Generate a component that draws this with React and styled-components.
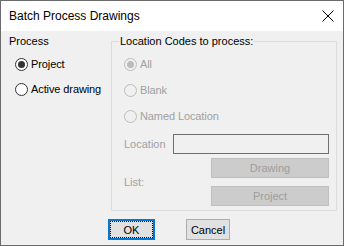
import styled, { createGlobalStyle } from "styled-components";

const GlobalStyle = createGlobalStyle`
  html, body {
    margin: 0;
    padding: 0;
    background: #f0f0f0;
  }
  body {
    font-family: "Liberation Sans", Arial, sans-serif;
    font-size: 11px;
    color: #000;
  }
`;

const Window = styled.div`
  width: 344px;
  height: 246px;
  box-sizing: border-box;
  border: 1px solid #6b6b6b;
  background: #f0f0f0;
  display: flex;
  flex-direction: column;
`;

const TitleBar = styled.div`
  height: 30px;
  flex: none;
  background: #fff;
  display: flex;
  align-items: center;
  justify-content: space-between;
  padding: 0 8px 0 8px;
  font-family: "Liberation Sans", Arial, sans-serif;
  font-size: 12px;
`;

const CloseIcon = () => (
  <svg width="12" height="12" viewBox="0 0 12 12" style={{ marginRight: 1 }}>
    <path d="M0.5 0.5 L11.5 11.5 M11.5 0.5 L0.5 11.5" stroke="#000" strokeWidth="1" fill="none" />
  </svg>
);

const Body = styled.div`
  display: flex;
  padding: 4px 0 0 8px;
`;

const LeftColumn = styled.div`
  width: 102px;
  display: flex;
  flex-direction: column;
`;

const Label = styled.div`
  line-height: 13px;
  color: ${(p) => (p.$disabled ? "#a0a0a0" : "#000")};
`;

const RadioList = styled.div`
  display: flex;
  flex-direction: column;
  gap: ${(p) => p.$gap || 12}px;
  margin-top: ${(p) => p.$top || 10}px;
  margin-left: ${(p) => p.$left || 0}px;
`;

const RadioRow = styled.div`
  display: flex;
  align-items: center;
  gap: 3px;
  height: 13px;
  line-height: 13px;
  letter-spacing: -0.1px;
  color: ${(p) => (p.$disabled ? "#a0a0a0" : "#000")};
`;

const RadioCircle = styled.span`
  width: 13px;
  height: 13px;
  box-sizing: border-box;
  border-radius: 50%;
  border: 1px solid ${(p) => (p.$disabled ? "#bcbcbc" : "#333")};
  background: ${(p) => (p.$disabled ? "#f0f0f0" : "#fff")};
  display: flex;
  align-items: center;
  justify-content: center;
  flex: none;

  &::after {
    content: "";
    width: 7px;
    height: 7px;
    border-radius: 50%;
    background: ${(p) => (p.$disabled ? "#bcbcbc" : "#333")};
    display: ${(p) => (p.$checked ? "block" : "none")};
  }
`;

const Radio = ({ children, checked, disabled }) => (
  <RadioRow $disabled={disabled}>
    <RadioCircle $checked={checked} $disabled={disabled} />
    {children}
  </RadioRow>
);

const Group = styled.fieldset`
  margin: 0;
  width: 226px;
  box-sizing: border-box;
  border: 1px solid #dcdcdc;
  padding: 0 7px 4px 12px;
`;

const Legend = styled.legend`
  padding: 0 1px;
  margin-left: -5px;
  line-height: 13px;
`;

const FormGrid = styled.div`
  display: grid;
  grid-template-columns: 49px 156px;
  row-gap: 4px;
  align-items: center;
  margin-top: 11px;
`;

const TextBox = styled.div`
  height: 20px;
  box-sizing: border-box;
  border: 1px solid #6e6e6e;
  background: #f0f0f0;
`;

const ButtonStack = styled.div`
  display: flex;
  flex-direction: column;
  gap: 8px;
  padding-left: 38px;
`;

const DisabledButton = styled.div`
  height: 20px;
  box-sizing: border-box;
  border: 1px solid #bfbfbf;
  background: #cccccc;
  color: #9d9d9d;
  display: flex;
  align-items: center;
  justify-content: center;
`;

const Footer = styled.div`
  display: flex;
  gap: 31px;
  padding: 8px 0 0 107px;
`;

const Button = styled.div`
  width: ${(p) => p.$width}px;
  height: 21px;
  box-sizing: border-box;
  border: ${(p) => (p.$focused ? "2px solid #0078d7" : "1px solid #adadad")};
  background: #e1e1e1;
  display: flex;
  align-items: center;
  justify-content: center;
  outline: ${(p) => (p.$focused ? "1px dotted #000" : "none")};
  outline-offset: -3px;
`;

export default function App() {
  return (
    <>
      <GlobalStyle />
      <Window>
        <TitleBar>
          <span>Batch Process Drawings</span>
          <CloseIcon />
        </TitleBar>
        <Body>
          <LeftColumn>
            <Label>Process</Label>
            <RadioList $left={6}>
              <Radio checked>Project</Radio>
              <Radio>Active drawing</Radio>
            </RadioList>
          </LeftColumn>
          <Group>
            <Legend>Location Codes to process:</Legend>
            <RadioList $top={10} $gap={13}>
              <Radio checked disabled>All</Radio>
              <Radio disabled>Blank</Radio>
              <Radio disabled>Named Location</Radio>
            </RadioList>
            <FormGrid>
              <Label $disabled>Location</Label>
              <TextBox />
              <Label $disabled>List:</Label>
              <ButtonStack>
                <DisabledButton>Drawing</DisabledButton>
                <DisabledButton>Project</DisabledButton>
              </ButtonStack>
            </FormGrid>
          </Group>
        </Body>
        <Footer>
          <Button $width={47} $focused>OK</Button>
          <Button $width={44}>Cancel</Button>
        </Footer>
      </Window>
    </>
  );
}
